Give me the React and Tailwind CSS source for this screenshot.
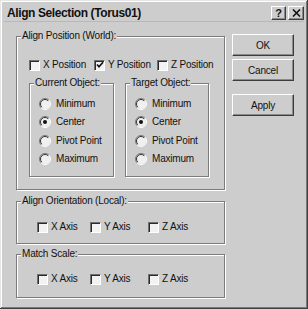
import React from "react";

const BG = "bg-[#cdcdcd]";

function Check({ checked }) {
  return (
    <span className="w-[11px] h-[11px] shrink-0 bg-[#f2f2f2] border-t border-l border-t-[#707070] border-l-[#707070] border-r border-b border-r-white border-b-white shadow-[inset_1px_1px_0_#2a2a2a] flex items-center justify-center">
      {checked && (
        <svg width="8" height="8" viewBox="0 0 8 8">
          <polyline points="1,3.5 3,5.8 7,1.2" fill="none" stroke="#111" strokeWidth="1.7" />
        </svg>
      )}
    </span>
  );
}

function Radio({ on }) {
  return (
    <svg width="12" height="12" viewBox="0 0 12 12" className="shrink-0">
      <circle cx="6" cy="6" r="5" fill="#f0f0f0" />
      <path d="M2.1 9.9 A5.5 5.5 0 0 1 9.9 2.1" fill="none" stroke="#7a7a7a" strokeWidth="1" />
      <path d="M9.9 2.1 A5.5 5.5 0 0 1 2.1 9.9" fill="none" stroke="#ffffff" strokeWidth="1" />
      <path d="M2.8 9.2 A4.5 4.5 0 0 1 9.2 2.8" fill="none" stroke="#333" strokeWidth="1" />
      {on && <circle cx="6" cy="6" r="2" fill="#111" />}
    </svg>
  );
}

function Group({ label, className, children }) {
  return (
    <div className={`relative border border-[#7c7c7c] shadow-[1px_1px_0_#fff,inset_1px_1px_0_#fff] ${className}`}>
      <span className={`absolute -top-[7px] left-[4px] px-[1px] ${BG} text-[10px] leading-[12px] tracking-[-0.2px] text-[#111]`}>
        {label}
      </span>
      {children}
    </div>
  );
}

function CheckItem({ label, checked, className }) {
  return (
    <div className={`flex items-center gap-[3px] ${className}`}>
      <Check checked={checked} />
      <span className="text-[10px] leading-[12px] tracking-[-0.2px] text-[#111]">{label}</span>
    </div>
  );
}

function RadioGroup({ label, sel, className }) {
  const items = ["Minimum", "Center", "Pivot Point", "Maximum"];
  return (
    <Group label={label} className={`h-[94px] ${className}`}>
      <div className="pt-[11px] pl-[9px] flex flex-col">
        {items.map((it) => (
          <div key={it} className="h-[18.3px] flex items-center gap-[5px]">
            <Radio on={it === sel} />
            <span className="text-[10px] leading-[12px] tracking-[-0.2px] text-[#111]">{it}</span>
          </div>
        ))}
      </div>
    </Group>
  );
}

function Btn({ children, className }) {
  return (
    <div className={`h-[22px] w-[62px] flex items-center justify-center border border-t-white border-l-white border-r-[#3c3c3c] border-b-[#3c3c3c] shadow-[inset_-1px_-1px_0_#8a8a8a] text-[10px] tracking-[-0.2px] text-[#111] ${className}`}>
      {children}
    </div>
  );
}

function TitleBtn({ children, className }) {
  return (
    <div className={`h-[14px] flex items-center justify-center border border-t-white border-l-white border-r-[#3c3c3c] border-b-[#3c3c3c] shadow-[inset_-1px_-1px_0_#8a8a8a] ${BG} ${className}`}>
      {children}
    </div>
  );
}

export default function App() {
  return (
    <div
      className={`w-[308px] h-[309px] ${BG} font-['Liberation_Sans',Arial,sans-serif] p-[4px] shadow-[inset_-1px_-1px_0_#404040,inset_1px_1px_0_#e6e6e6,inset_-2px_-2px_0_#7a7a7a,inset_2px_2px_0_#fff] overflow-hidden`}
    >
      {/* title bar */}
      <div className="h-[18px] flex items-center pl-[3px] pr-[0px] border-b border-b-[#b8b8b8]">
        <span className="text-[12px] font-bold tracking-[-0.4px] text-[#111] leading-none">Align Selection (Torus01)</span>
        <div className="ml-auto flex items-center gap-[2px] pt-[1px]">
          <TitleBtn className="w-[15px]">
            <span className="text-[11px] font-bold leading-none text-[#111]">?</span>
          </TitleBtn>
          <TitleBtn className="w-[16px]">
            <svg width="9" height="8" viewBox="0 0 9 8">
              <path d="M1 0.5 L8 7.5 M8 0.5 L1 7.5" stroke="#111" strokeWidth="1.6" />
            </svg>
          </TitleBtn>
        </div>
      </div>

      {/* body */}
      <div className="flex items-start pl-[12px]">
        <div className="w-[209px] mt-[14px] flex flex-col">
          <Group label="Align Position (World):" className="h-[154px]">
            <div className="pt-[22px] pl-[12px] flex">
              <CheckItem label="X Position" className="w-[65px]" />
              <CheckItem label="Y Position" checked className="w-[63px]" />
              <CheckItem label="Z Position" />
            </div>
            <div className="mt-[12px] pl-[12px] flex gap-[11px]">
              <RadioGroup label="Current Object:" sel="Center" className="w-[85px]" />
              <RadioGroup label="Target Object:" sel="Center" className="w-[84px]" />
            </div>
          </Group>

          <Group label="Align Orientation (Local):" className="h-[43px] mt-[11px]">
            <div className="pt-[19px] pl-[20px] flex">
              <CheckItem label="X Axis" className="w-[53px]" />
              <CheckItem label="Y Axis" className="w-[58px]" />
              <CheckItem label="Z Axis" />
            </div>
          </Group>

          <Group label="Match Scale:" className="h-[44px] mt-[10px]">
            <div className="pt-[18px] pl-[20px] flex">
              <CheckItem label="X Axis" className="w-[53px]" />
              <CheckItem label="Y Axis" className="w-[58px]" />
              <CheckItem label="Z Axis" />
            </div>
          </Group>
        </div>

        <div className="ml-[7px] mt-[12px] flex flex-col">
          <Btn>OK</Btn>
          <Btn className="mt-[3px]">Cancel</Btn>
          <Btn className="mt-[13px]">Apply</Btn>
        </div>
      </div>
    </div>
  );
}
